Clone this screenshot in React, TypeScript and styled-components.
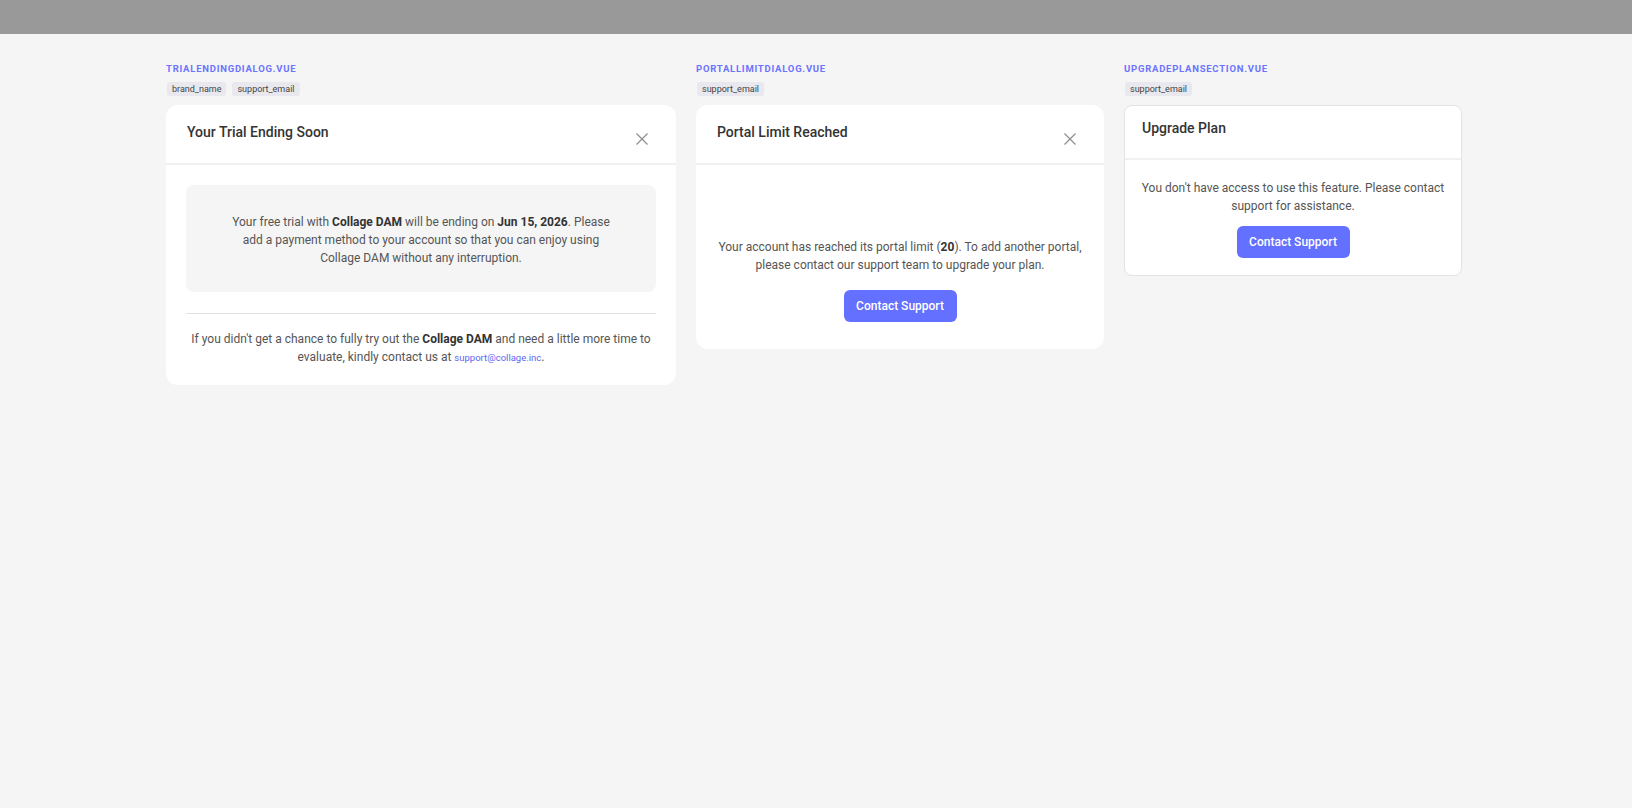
import styled, { createGlobalStyle } from "styled-components";

const GlobalStyle = createGlobalStyle`
  * { box-sizing: border-box; }
  html, body {
    margin: 0;
    padding: 0;
    background: #f5f5f5;
    font-family: Roboto, "Liberation Sans", sans-serif;
    color: #555;
  }
`;

const TopBar = styled.div`
  height: 34px;
  background: #999999;
`;

const Page = styled.div`
  width: 1300px;
  margin: 0 auto;
  padding-top: 29px;
  display: flex;
  align-items: flex-start;
  gap: 20px;
`;

const Column = styled.section<{ $width: number }>`
  width: ${(p) => p.$width}px;
  flex-shrink: 0;
  display: flex;
  flex-direction: column;
`;

const FileName = styled.div`
  font-size: 9.5px;
  line-height: 12px;
  font-weight: 700;
  letter-spacing: 0.08em;
  text-transform: uppercase;
  color: #6b73ff;
`;

const Chips = styled.div`
  display: flex;
  gap: 6px;
  margin: 7px 0 9px 1px;
`;

const Chip = styled.span`
  height: 14px;
  padding: 0 5px;
  border-radius: 3px;
  background: #e8e8ee;
  color: #444;
  font-size: 9px;
  line-height: 14px;
`;

const Card = styled.div<{ $bordered?: boolean }>`
  background: #fff;
  border-radius: ${(p) => (p.$bordered ? 8 : 12)}px;
  border: ${(p) => (p.$bordered ? "1px solid #e3e3e3" : "none")};
  overflow: hidden;
`;

const Header = styled.div<{ $compact?: boolean }>`
  display: flex;
  justify-content: space-between;
  align-items: flex-start;
  padding: ${(p) => (p.$compact ? "11px 17px 19px" : "16px 22px 20px 21px")};
  border-bottom: 2px solid #f1f1f1;
`;

const Title = styled.h2`
  margin: 0;
  font-size: 14px;
  line-height: 22px;
  font-weight: 500;
  color: #333;
`;

const CloseButton = styled.button`
  width: 24px;
  height: 24px;
  margin: 6px 0 -8px;
  padding: 0;
  border: none;
  background: transparent;
  display: flex;
  align-items: center;
  justify-content: center;
  cursor: pointer;
`;

const Body = styled.div<{ $pad: string }>`
  padding: ${(p) => p.$pad};
  display: flex;
  flex-direction: column;
  align-items: center;
  text-align: center;
`;

const Text = styled.p`
  margin: 0;
  font-size: 12px;
  line-height: 18px;
  color: #555;

  b {
    color: #333;
    font-weight: 700;
  }
`;

const Notice = styled.div`
  align-self: stretch;
  background: #f5f5f5;
  border-radius: 8px;
  padding: 28px 40px 25px;
`;

const Divider = styled.hr`
  align-self: stretch;
  border: none;
  border-top: 1px solid #e3e3e3;
  margin: 21px 0 16px;
`;

const Mail = styled.a`
  font-size: 9.5px;
  color: #5b66f6;
  text-decoration: none;
`;

const PrimaryButton = styled.button<{ $gap: number }>`
  margin-top: ${(p) => p.$gap}px;
  width: 113px;
  height: 32px;
  border: none;
  border-radius: 6px;
  background: #6470ff;
  color: #fff;
  font-family: inherit;
  font-size: 12px;
  font-weight: 500;
  cursor: pointer;
`;

function CloseIcon() {
  return (
    <CloseButton aria-label="Close">
      <svg width="12" height="12" viewBox="0 0 12 12" fill="none">
        <path d="M0.5 0.5L11.5 11.5M11.5 0.5L0.5 11.5" stroke="#8a8a8a" strokeWidth="1.1" />
      </svg>
    </CloseButton>
  );
}

export default function App() {
  return (
    <>
      <GlobalStyle />
      <TopBar />
      <Page>
        <Column $width={510}>
          <FileName>TrialEndingDialog.vue</FileName>
          <Chips>
            <Chip>brand_name</Chip>
            <Chip>support_email</Chip>
          </Chips>
          <Card>
            <Header>
              <Title>Your Trial Ending Soon</Title>
              <CloseIcon />
            </Header>
            <Body $pad="20px 20px 18px">
              <Notice>
                <Text>
                  Your free trial with <b>Collage DAM</b> will be ending on <b>Jun 15, 2026</b>. Please add a
                  payment method to your account so that you can enjoy using Collage DAM without any
                  interruption.
                </Text>
              </Notice>
              <Divider />
              <Text>
                If you didn't get a chance to fully try out the <b>Collage DAM</b> and need a little more time to
                evaluate, kindly contact us at <Mail href="#">support@collage.inc</Mail>.
              </Text>
            </Body>
          </Card>
        </Column>

        <Column $width={408}>
          <FileName>PortalLimitDialog.vue</FileName>
          <Chips>
            <Chip>support_email</Chip>
          </Chips>
          <Card>
            <Header>
              <Title>Portal Limit Reached</Title>
              <CloseIcon />
            </Header>
            <Body $pad="73px 20px 27px">
              <Text>
                Your account has reached its portal limit (<b>20</b>). To add another portal, please contact our
                support team to upgrade your plan.
              </Text>
              <PrimaryButton $gap={16}>Contact Support</PrimaryButton>
            </Body>
          </Card>
        </Column>

        <Column $width={338}>
          <FileName>UpgradePlanSection.vue</FileName>
          <Chips>
            <Chip>support_email</Chip>
          </Chips>
          <Card $bordered>
            <Header $compact>
              <Title>Upgrade Plan</Title>
            </Header>
            <Body $pad="19px 10px 17px">
              <Text>You don't have access to use this feature. Please contact support for assistance.</Text>
              <PrimaryButton $gap={11}>Contact Support</PrimaryButton>
            </Body>
          </Card>
        </Column>
      </Page>
    </>
  );
}
